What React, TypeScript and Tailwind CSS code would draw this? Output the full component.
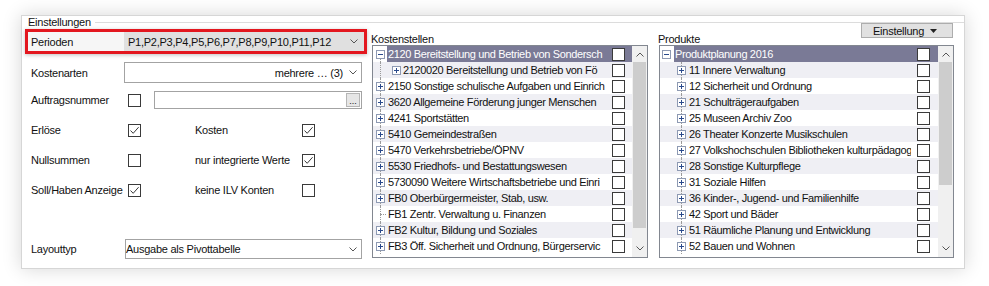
import React from "react";

type Node = { text: string; icon?: "plus" | "minus" | "none"; level?: number; selected?: boolean };

// texts as the list shows them (the control cuts the long names)
const KOSTENSTELLEN: Node[] = [
  { text: "2120 Bereitstellung und Betrieb von Sondersch", icon: "minus", selected: true },
  { text: "2120020 Bereitstellung und Betrieb von Fö", level: 1 },
  { text: "2150 Sonstige schulische Aufgaben und Einrich" },
  { text: "3620 Allgemeine Förderung junger Menschen" },
  { text: "4241 Sportstätten" },
  { text: "5410 Gemeindestraßen" },
  { text: "5470 Verkehrsbetriebe/ÖPNV" },
  { text: "5530 Friedhofs- und Bestattungswesen" },
  { text: "5730090 Weitere Wirtschaftsbetriebe und Einri" },
  { text: "FB0 Oberbürgermeister, Stab, usw." },
  { text: "FB1 Zentr. Verwaltung u. Finanzen", icon: "none" },
  { text: "FB2 Kultur, Bildung und Soziales" },
  { text: "FB3 Öff. Sicherheit und Ordnung, Bürgerservic" },
];

const PRODUKTE: Node[] = [
  { text: "Produktplanung 2016", icon: "minus", selected: true },
  { text: "11 Innere Verwaltung", level: 1 },
  { text: "12 Sicherheit und Ordnung", level: 1 },
  { text: "21 Schulträgeraufgaben", level: 1 },
  { text: "25 Museen Archiv Zoo", level: 1 },
  { text: "26 Theater Konzerte Musikschulen", level: 1 },
  { text: "27 Volkshochschulen Bibliotheken kulturpädagog", level: 1 },
  { text: "28 Sonstige Kulturpflege", level: 1 },
  { text: "31 Soziale Hilfen", level: 1 },
  { text: "36 Kinder-, Jugend- und Familienhilfe", level: 1 },
  { text: "42 Sport und Bäder", level: 1 },
  { text: "51 Räumliche Planung und Entwicklung", level: 1 },
  { text: "52 Bauen und Wohnen", level: 1 },
];

function Chevron({ up = false }: { up?: boolean }) {
  return (
    <svg width="8" height="5" viewBox="0 0 8 5" aria-hidden>
      <path d={up ? "M0.5 4.5L4 1L7.5 4.5" : "M0.5 0.5L4 4L7.5 0.5"} fill="none" stroke="#555" strokeWidth="1" />
    </svg>
  );
}

function Check({ checked = false, className = "" }: { checked?: boolean; className?: string }) {
  return (
    <span className={`flex h-[13px] w-[13px] shrink-0 items-center justify-center border border-[#3a3a3a] bg-white ${className}`}>
      {checked && (
        <svg width="11" height="11" viewBox="0 0 11 11" aria-hidden>
          <path d="M1.5 5.5L4.2 8.3L9.6 2.2" fill="none" stroke="#3a3a3a" strokeWidth="1" />
        </svg>
      )}
    </span>
  );
}

function ExpIcon({ minus = false }: { minus?: boolean }) {
  return (
    <svg width="9" height="9" viewBox="0 0 9 9" className="relative" aria-hidden>
      <rect x="0.5" y="0.5" width="8" height="8" fill="#fff" stroke="#8e9ab3" />
      <path d="M2 4.5h5" stroke="#2a4a8c" />
      {!minus && <path d="M4.5 2v5" stroke="#2a4a8c" />}
    </svg>
  );
}

// one 9px tree column: dotted guide behind, optional +/- box on top
function Cell({ icon, line }: { icon?: "plus" | "minus" | "none"; line?: "full" | "down" | "none" }) {
  return (
    <div className="relative flex h-full w-[9px] shrink-0 items-center">
      {line === "full" && <span className="absolute top-0 bottom-0 left-[4px] border-l border-dotted border-[#9a9a9a]" />}
      {line === "down" && <span className="absolute top-[8px] bottom-0 left-[4px] border-l border-dotted border-[#9a9a9a]" />}
      {icon === "none" && <span className="absolute top-[8px] left-[4px] w-[6px] border-t border-dotted border-[#9a9a9a]" />}
      {(icon === "plus" || icon === "minus") && <ExpIcon minus={icon === "minus"} />}
    </div>
  );
}

function Scrollbar({ thumb }: { thumb: string }) {
  return (
    <div className="flex w-[15px] shrink-0 flex-col bg-[#f0f0f0]">
      <div className="flex h-[16px] items-center justify-center">
        <Chevron up />
      </div>
      <div className={`mx-px bg-[#cdcdcd] ${thumb}`} />
      <div className="flex-1" />
      <div className="flex h-[17px] items-center justify-center">
        <Chevron />
      </div>
    </div>
  );
}

function KostenRow({ node, idx }: { node: Node; idx: number }) {
  const stripe = idx % 2 === 1 ? "bg-[#efeff4]" : "bg-white";
  const icon = node.icon ?? "plus";
  return (
    <div className={`flex h-4 shrink-0 ${stripe}`}>
      <div className="flex h-full pl-[3px]">
        {node.level === 1 ? (
          <>
            <Cell line="full" />
            <div className="w-[7px]" />
            <Cell icon="plus" />
          </>
        ) : (
          <Cell icon={icon} line={idx === 0 ? "down" : "full"} />
        )}
      </div>
      <div
        className={`flex min-w-0 flex-1 items-center ${node.level === 1 ? "ml-px" : "ml-[2px]"} ${
          node.selected ? "bg-[#7a7a96] text-white" : ""
        }`}
      >
        <div className="min-w-0 flex-1 overflow-hidden pl-px leading-4 tracking-[-0.35px] whitespace-nowrap">{node.text}</div>
        <Check className="mr-[7px] ml-[6px]" />
      </div>
    </div>
  );
}

function ProduktRow({ node, idx }: { node: Node; idx: number }) {
  const stripe = idx % 2 === 1 ? "bg-[#efeff4]" : "bg-white";
  const root = idx === 0;
  return (
    <div className={`flex h-4 shrink-0 ${stripe}`}>
      <div className={`flex h-full ${root ? "pl-[2px]" : "pl-[17px]"}`}>
        <Cell icon={root ? "minus" : "plus"} line={root ? "none" : "full"} />
      </div>
      <div
        className={`flex min-w-0 flex-1 items-center ${root ? "ml-[3px]" : "ml-[2px]"} ${
          node.selected ? "bg-[#7a7a96] text-white" : ""
        }`}
      >
        <div className="min-w-0 flex-1 overflow-hidden pl-px leading-4 tracking-[-0.35px] whitespace-nowrap">{node.text}</div>
        <Check className="mr-[8px] ml-[6px]" />
      </div>
    </div>
  );
}

function Label({ children }: { children: React.ReactNode }) {
  return <span className="w-[99px] shrink-0 pl-[6px] whitespace-nowrap">{children}</span>;
}

export default function App() {
  return (
    <div className="h-[286px] w-[989px] bg-white pt-[15px] pl-[21px] font-['Liberation_Sans',Arial,sans-serif] text-[11px] leading-[12px] tracking-[-0.25px] text-[#111]">
      <div className="h-[254px] w-[944px] border border-[#d6d6d6] bg-white shadow-[0_0_18px_rgba(0,0,0,0.16)]">
        <div className="flex h-[12px] items-center pl-[6px]">
          <span>Einstellungen</span>
          <span className="ml-[4px] h-px flex-1 bg-[#dcdcdc]" />
        </div>

        <div className="flex pl-[3px]">
          {/* left: settings form */}
          <div className="mt-px flex w-[342px] shrink-0 flex-col">
            <div className="flex h-[25px] items-stretch border-[3px] border-[#e3171f] shadow-[0_1px_4px_rgba(0,0,0,0.25)]">
              <span className="flex w-[96px] items-center bg-[#f6f6f6] pl-[3px]">Perioden</span>
              <div className="flex flex-1 items-center justify-between bg-[#e0e0e0] pr-[6px] pl-[4px]">
                <span>P1,P2,P3,P4,P5,P6,P7,P8,P9,P10,P11,P12</span>
                <Chevron />
              </div>
            </div>

            <div className="mt-[8px] flex h-[21px] items-center">
              <Label>Kostenarten</Label>
              <div className="flex h-full w-[238px] items-center justify-end border border-[#a3a3a3] bg-white pr-[4px]">
                <span>mehrere … (3)</span>
                <span className="ml-[6px] flex">
                  <Chevron />
                </span>
              </div>
            </div>

            <div className="mt-[8px] flex h-[18px] items-center">
              <Label>Auftragsnummer</Label>
              <Check className="ml-[4px]" />
              <div className="ml-[13px] flex h-full w-[208px] items-center justify-end border border-[#a3a3a3] bg-white pr-px">
                <span className="flex h-[14px] w-[14px] items-end justify-center border border-[#b5b5b5] bg-[#e6e6e6] pb-[2px] text-[9px] leading-[6px] tracking-normal">
                  ...
                </span>
              </div>
            </div>

            {[
              ["Erlöse", true, "Kosten", true],
              ["Nullsummen", false, "nur integrierte Werte", true],
              ["Soll/Haben Anzeige", true, "keine ILV Konten", false],
            ].map(([a, ac, b, bc], i) => (
              <div key={a as string} className={`flex h-[20px] items-center ${i === 0 ? "mt-[11px]" : "mt-[10px]"}`}>
                <Label>{a as string}</Label>
                <Check className="ml-[4px]" checked={ac as boolean} />
                <span className="ml-[54px] w-[107px] whitespace-nowrap">{b as string}</span>
                <Check checked={bc as boolean} />
              </div>
            ))}

            <div className="mt-[39px] flex h-[20px] items-center">
              <Label>Layouttyp</Label>
              <div className="ml-px flex h-full w-[237px] items-center justify-between border border-[#a3a3a3] bg-white pr-[4px]">
                <span>Ausgabe als Pivottabelle</span>
                <Chevron />
              </div>
            </div>
          </div>

          {/* middle: Kostenstellen */}
          <div className="-mt-[5px] ml-[4px] flex w-[277px] shrink-0 flex-col">
            <div className="flex h-[22px] items-end">
              <span>Kostenstellen</span>
            </div>
            <div className="ml-px flex h-[213px] border border-[#828790] bg-white">
              <div className="flex min-w-0 flex-1 flex-col">
                {KOSTENSTELLEN.map((n, i) => (
                  <KostenRow key={n.text} node={n} idx={i} />
                ))}
              </div>
              <Scrollbar thumb="h-[166px]" />
            </div>
          </div>

          {/* right: Produkte */}
          <div className="-mt-[5px] ml-[10px] flex w-[296px] shrink-0 flex-col">
            <div className="flex h-[22px] justify-between">
              <span className="self-end">Produkte</span>
              <button className="mr-px flex h-[15px] w-[92px] items-center border border-[#adadad] bg-[#e1e1e1] pl-[11px] leading-[12px]">
                Einstellung
                <svg width="7" height="4" viewBox="0 0 7 4" className="ml-[6px]" aria-hidden>
                  <path d="M0 0h7L3.5 4z" fill="#222" />
                </svg>
              </button>
            </div>
            <div className="ml-px flex h-[213px] border border-[#828790] bg-white">
              <div className="flex min-w-0 flex-1 flex-col">
                {PRODUKTE.map((n, i) => (
                  <ProduktRow key={n.text} node={n} idx={i} />
                ))}
              </div>
              <Scrollbar thumb="h-[123px]" />
            </div>
          </div>
        </div>
      </div>
    </div>
  );
}
